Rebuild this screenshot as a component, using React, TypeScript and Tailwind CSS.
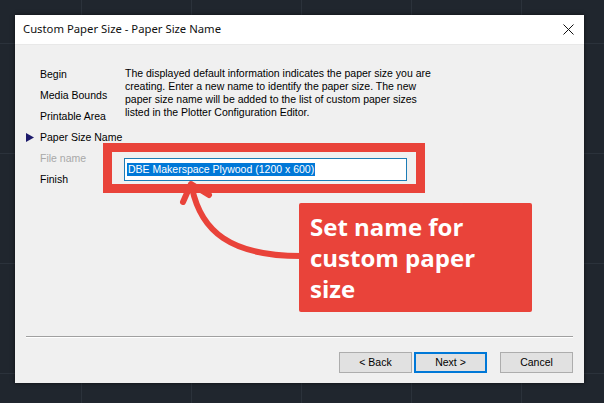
import React from "react";

const steps = [
  { label: "Begin" },
  { label: "Media Bounds" },
  { label: "Printable Area" },
  { label: "Paper Size Name", current: true },
  { label: "File name", disabled: true },
  { label: "Finish" },
];

const uiFont = { fontFamily: '"Liberation Sans", Arial, sans-serif' };

// Wizard step list on the left of the dialog
const StepList: React.FC = () => (
  <div className="w-[110px] shrink-0 pl-[11px] pt-[19px]">
    {steps.map((s) => (
      <div key={s.label} className="flex h-[21px] items-center">
        <span className="w-[14px] shrink-0">
          {s.current && (
            <svg width="8" height="9" viewBox="0 0 8 9">
              <path d="M0 0 L8 4.5 L0 9 Z" fill="#1c1a6b" />
            </svg>
          )}
        </span>
        <span className={`whitespace-nowrap text-[10.5px] ${s.disabled ? "text-[#a8a8a8]" : "text-black"}`}>
          {s.label}
        </span>
      </div>
    ))}
  </div>
);

const WizardButton: React.FC<{ label: string; primary?: boolean; className?: string }> = ({
  label,
  primary = false,
  className = "",
}) => (
  <button
    className={`flex h-[21px] w-[73px] items-center justify-center bg-[#e1e1e1] text-[10.5px] text-black ${
      primary ? "border-2 border-[#0078d7]" : "border border-[#adadad]"
    } ${className}`}
  >
    {label}
  </button>
);

export default function App() {
  return (
    <div
      className="h-[403px] w-[604px] overflow-hidden bg-[#20262e] bg-[linear-gradient(to_right,#2b323b_1px,transparent_1px),linear-gradient(to_bottom,#2b323b_1px,transparent_1px)] bg-[size:110px_110px] bg-[position:81px_43px] pl-[15px] pt-[15px]"
    >
      <div className="flex h-[368px] w-[569px] flex-col shadow-[0_0_4px_rgba(0,0,0,0.6)]" style={uiFont}>
        {/* Title bar */}
        <div className="flex h-[30px] items-center justify-between border-b border-[#e8e8e8] bg-white pl-[8px] pr-[10px]">
          <span className="text-[11.3px] text-[#111]" style={{ fontFamily: '"Noto Sans", "Open Sans", sans-serif' }}>
            Custom Paper Size - Paper Size Name
          </span>
          <svg width="11" height="11" viewBox="0 0 11 11">
            <path d="M0.5 0.5 L10.5 10.5 M10.5 0.5 L0.5 10.5" stroke="#111" strokeWidth="1" />
          </svg>
        </div>

        {/* Body */}
        <div className="relative flex flex-1 flex-col bg-[#f0f0f0]">
          <div className="flex h-[291px]">
            <StepList />
            <div className="pt-[22px]">
              <p className="whitespace-nowrap text-[10.5px] leading-[13px] text-black">
                The displayed default information indicates the paper size you are
                <br />
                creating. Enter a new name to identify the paper size. The new
                <br />
                paper size name will be added to the list of custom paper sizes
                <br />
                listed in the Plotter Configuration Editor.
              </p>
              <div className="ml-[-1px] mt-[39px] flex h-[23px] w-[283px] items-center border border-[#1c7cb6] bg-white px-[2px]">
                <span className="bg-[#0078d7] px-[1px] text-[10.5px] leading-[13px] text-white">
                  DBE Makerspace Plywood (1200 x 600)
                </span>
              </div>
            </div>
          </div>

          {/* Separator */}
          <div className="mx-[11px] h-[2px] border-t border-[#a0a0a0] border-b border-b-white" />

          {/* Buttons */}
          <div className="mr-[11px] mt-[14px] flex justify-end">
            <WizardButton label="< Back" />
            <WizardButton label="Next >" primary className="ml-[2px]" />
            <WizardButton label="Cancel" className="ml-[13px]" />
          </div>

          {/* Annotation: highlight box, arrow and callout */}
          <div className="pointer-events-none absolute left-[88px] top-[98px] h-[50px] w-[322px] border-[9px] border-[#e9433a]" />
          <svg className="pointer-events-none absolute left-0 top-0" width="569" height="338">
            <path
              d="M286 211 C 215 211 186 186 177 143"
              fill="none"
              stroke="#e9433a"
              strokeWidth="6"
              strokeLinecap="round"
            />
            <path
              d="M168 157 L176 139 L194 150"
              fill="none"
              stroke="#e9433a"
              strokeWidth="6"
              strokeLinecap="round"
              strokeLinejoin="round"
            />
          </svg>
          <div
            className="absolute left-[284px] top-[158px] h-[109px] w-[233px] rounded-[2px] bg-[#e9433a] pl-[11px] pt-[8px] text-[24px] font-bold leading-[31px] text-white"
            style={{ fontFamily: '"Open Sans", "Noto Sans", sans-serif' }}
          >
            Set name for
            <br />
            custom paper
            <br />
            size
          </div>
        </div>
      </div>
    </div>
  );
}
